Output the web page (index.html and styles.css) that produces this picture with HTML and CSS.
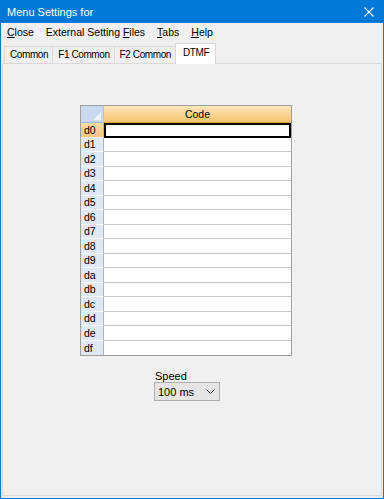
FILE: index.html
```html
<!DOCTYPE html>
<html lang="en">
<head>
    <meta charset="UTF-8">
    <title>Menu Settings for</title>
    <link rel="stylesheet" href="styles.css">
</head>
<body>

<div class="window">
    <div class="titlebar">
        <span class="title">Menu Settings for</span>
        <svg class="close-btn" width="10" height="10" viewBox="0 0 10 10">
            <path d="M0.5 0.5 L9.5 9.5 M9.5 0.5 L0.5 9.5" stroke="#fff" stroke-width="1.1" fill="none"/>
        </svg>
    </div>

    <div class="menubar">
        <span class="menu-item"><u>C</u>lose</span>
        <span class="menu-item">External Setting <u>F</u>iles</span>
        <span class="menu-item"><u>T</u>abs</span>
        <span class="menu-item"><u>H</u>elp</span>
    </div>

    <div class="tabstrip">
        <span class="tab">Common</span>
        <span class="tab">F1 Common</span>
        <span class="tab">F2 Common</span>
        <span class="tab active">DTMF</span>
    </div>

    <div class="tabpage">
        <div class="grid">
            <div class="corner"></div>
            <div class="col-head">Code</div>

            <div class="row-head current">d0</div><div class="cell current"></div>
            <div class="row-head">d1</div><div class="cell"></div>
            <div class="row-head">d2</div><div class="cell"></div>
            <div class="row-head">d3</div><div class="cell"></div>
            <div class="row-head">d4</div><div class="cell"></div>
            <div class="row-head">d5</div><div class="cell"></div>
            <div class="row-head">d6</div><div class="cell"></div>
            <div class="row-head">d7</div><div class="cell"></div>
            <div class="row-head">d8</div><div class="cell"></div>
            <div class="row-head">d9</div><div class="cell"></div>
            <div class="row-head">da</div><div class="cell"></div>
            <div class="row-head">db</div><div class="cell"></div>
            <div class="row-head">dc</div><div class="cell"></div>
            <div class="row-head">dd</div><div class="cell"></div>
            <div class="row-head">de</div><div class="cell"></div>
            <div class="row-head last">df</div><div class="cell last"></div>
        </div>

        <div class="speed">
            <label class="speed-label">Speed</label>
            <div class="combo">
                <span>100 ms</span>
                <svg width="9" height="5" viewBox="0 0 9 5">
                    <path d="M0.5 0.5 L4.5 4.5 L8.5 0.5" stroke="#333" stroke-width="1" fill="none"/>
                </svg>
            </div>
        </div>
    </div>
</div>

</body>
</html>
```

FILE: styles.css
```css
body {
    margin: 0;
    font-family: 'Liberation Sans', Arial, sans-serif;
    background: #f0f0f0;
}

.window {
    width: 384px;
    height: 499px;
    box-sizing: border-box;
    border: 1px solid #0078d7;
    border-top: none;
    background-color: #f0f0f0;
    display: flex;
    flex-direction: column;
}

.titlebar {
    height: 23px;
    flex-shrink: 0;
    background-color: #0078d7;
    color: #ffffff;
    display: flex;
    align-items: center;
    justify-content: space-between;
    padding: 0 9px 0 6px;
    font-size: 11px;
}

.close-btn {
    margin-top: 1px;
}

.menubar {
    height: 18px;
    flex-shrink: 0;
    display: flex;
    align-items: center;
    font-size: 10.5px;
    color: #000;
}

.menu-item {
    padding: 0 6px;
}

.tabstrip {
    height: 22px;
    flex-shrink: 0;
    display: flex;
    align-items: flex-end;
    padding-left: 3px;
    font-size: 10px;
    letter-spacing: -0.4px;
    position: relative;
    z-index: 1;
}

.tab {
    height: 17px;
    box-sizing: border-box;
    padding: 2px 4px 0 5px;
    border: 1px solid #d9d9d9;
    border-bottom: none;
    border-right: none;
    background-color: #f0f0f0;
}

.tab.active {
    height: 21px;
    margin-bottom: -1px;
    padding: 3px 6px 0 7px;
    background-color: #ffffff;
    border-right: 1px solid #d9d9d9;
}

.tabpage {
    flex: 1;
    margin: 0 1px 2px 1px;
    border: 1px solid #d9d9d9;
    background-color: #f0f0f0;
}

/* data grid */
.grid {
    margin: 41px 0 0 77px;
    width: 212px;
    height: 251px;
    box-sizing: border-box;
    border: 1px solid #a0a0a0;
    display: grid;
    grid-template-columns: 23px 1fr;
    grid-template-rows: 17px repeat(16, 1fr);
    background-color: #ffffff;
    font-size: 10.5px;
}

.corner {
    background-color: #c9d9ef;
    border-right: 1px solid #b4c7e0;
    border-bottom: 1px solid #9fb6d2;
    position: relative;
}

.corner::after {
    content: "";
    position: absolute;
    right: 2px;
    bottom: 2px;
    border-style: solid;
    border-width: 0 0 8px 8px;
    border-color: transparent transparent #eef3fa transparent;
}

.col-head {
    background: linear-gradient(to bottom, #fce6bc, #f5c26f);
    border-bottom: 1px solid #e3a53e;
    display: flex;
    align-items: center;
    justify-content: center;
}

.row-head {
    background-color: #dfe8f5;
    border-right: 1px solid #9fb6d2;
    border-bottom: 1px solid #f7f9fc;
    padding-left: 3px;
    display: flex;
    align-items: center;
}

.row-head.current {
    background: linear-gradient(to bottom, #fbdca6, #f6c679);
    border-bottom-color: #f0f0f0;
}

.cell {
    border-bottom: 1px solid #c8c8c8;
}

.row-head.last,
.cell.last {
    border-bottom: none;
}

.cell.current {
    border: 2px solid #000;
    box-sizing: border-box;
}

/* speed selector */
.speed {
    margin: 14px 0 0 151px;
    display: flex;
    flex-direction: column;
    align-items: flex-start;
    font-size: 11px;
}

.speed-label {
    margin-left: 1px;
    line-height: 12px;
}

.combo {
    width: 66px;
    height: 19px;
    box-sizing: border-box;
    border: 1px solid #adadad;
    background-color: #e5e5e5;
    display: flex;
    align-items: center;
    justify-content: space-between;
    padding: 0 4px 0 3px;
}
```
